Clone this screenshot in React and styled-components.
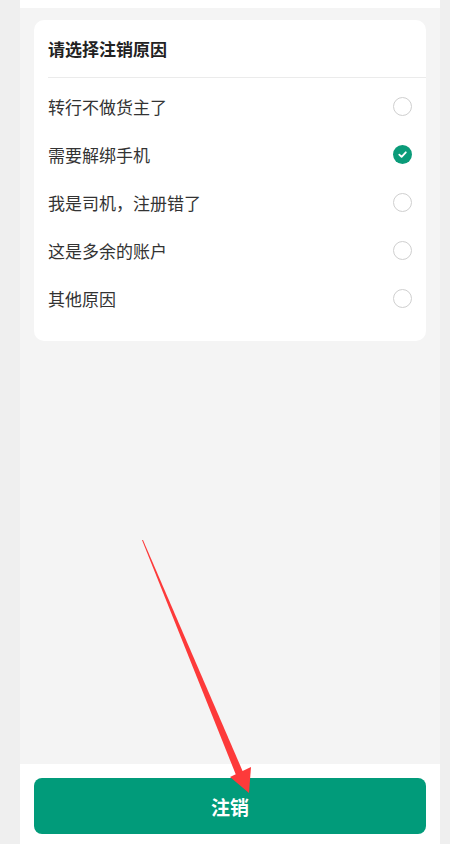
import React from "react";
import styled, { createGlobalStyle } from "styled-components";

const Global = createGlobalStyle`
  html, body { margin: 0; padding: 0; background: #efefef; }
  body { font-family: "Noto Sans CJK SC", "Noto Sans", sans-serif; }
`;

const Shell = styled.div`
  position: relative;
  width: 450px;
  height: 844px;
  display: flex;
  padding: 0 10px 0 20px;
  box-sizing: border-box;
  background: #efefef;
  overflow: hidden;
`;

const Column = styled.div`
  flex: 1;
  display: flex;
  flex-direction: column;
  background: #f4f4f4;
`;

const TopStrip = styled.div`
  height: 8px;
  background: #fff;
`;

const Content = styled.div`
  flex: 1;
  padding: 12px 14px;
`;

const Card = styled.div`
  background: #fff;
  border-radius: 10px;
  padding-bottom: 19px;
`;

const Title = styled.div`
  height: 57px;
  display: flex;
  align-items: center;
  padding-left: 14px;
  font-size: 17px;
  font-weight: 700;
  color: #222;
`;

const Divider = styled.div`
  margin-left: 14px;
  height: 1px;
  background: #ebebeb;
  margin-bottom: 4px;
`;

const Row = styled.div`
  height: 48px;
  display: flex;
  align-items: center;
  justify-content: space-between;
  padding: 0 14px;
  font-size: 17px;
  color: #333;
`;

const Radio = styled.span`
  width: 19px;
  height: 19px;
  border-radius: 50%;
  box-sizing: border-box;
  border: ${(p) => (p.$checked ? "none" : "1px solid #cfcfcf")};
  background: ${(p) => (p.$checked ? "#0a9b79" : "#fff")};
  display: flex;
  align-items: center;
  justify-content: center;
  margin-right: 0;
`;

const Footer = styled.div`
  height: 80px;
  background: #fff;
  padding: 14px 14px 10px;
  box-sizing: border-box;
`;

const Button = styled.button`
  width: 100%;
  height: 56px;
  border: none;
  border-radius: 8px;
  background: #019b7a;
  color: #fff;
  font-family: "Noto Sans CJK SC", sans-serif;
  font-size: 19px;
  font-weight: 700;
  letter-spacing: 0;
`;

const Overlay = styled.svg`
  position: absolute;
  left: 0;
  top: 0;
  pointer-events: none;
`;

const reasons = [
  { label: "转行不做货主了", checked: false },
  { label: "需要解绑手机", checked: true },
  { label: "我是司机，注册错了", checked: false },
  { label: "这是多余的账户", checked: false },
  { label: "其他原因", checked: false },
];

export default function App() {
  return (
    <>
      <Global />
      <Shell>
        <Column>
          <TopStrip />
          <Content>
            <Card>
              <Title>请选择注销原因</Title>
              <Divider />
              {reasons.map((r) => (
                <Row key={r.label}>
                  <span>{r.label}</span>
                  <Radio $checked={r.checked}>
                    {r.checked && (
                      <svg width="11" height="11" viewBox="0 0 12 12">
                        <path d="M2.5 6.2 L5 8.6 L9.6 3.6" fill="none" stroke="#fff" strokeWidth="2" strokeLinecap="round" strokeLinejoin="round" />
                      </svg>
                    )}
                  </Radio>
                </Row>
              ))}
            </Card>
          </Content>
          <Footer>
            <Button>注销</Button>
          </Footer>
        </Column>
        <Overlay width="450" height="844" viewBox="0 0 450 844">
          <polygon points="142,540 143,540 243,772 236,775" fill="#fd3a3a" />
          <polygon points="230,777 251,767 249,793" fill="#fd3a3a" />
        </Overlay>
      </Shell>
    </>
  );
}
